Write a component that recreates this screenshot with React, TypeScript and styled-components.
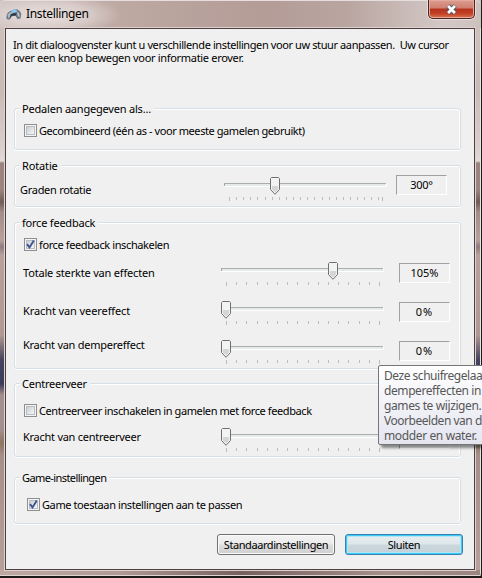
import React, { useLayoutEffect, useRef, useState } from "react";
import styled, { createGlobalStyle, css } from "styled-components";

const Global = createGlobalStyle`
  * { box-sizing: border-box; }
  body { margin: 0; overflow: hidden; background: #0d0b0b; }
`;

const uiFont = css`font: 11px/13px "Noto Sans", "Open Sans", sans-serif; color: #000;`;

const Window = styled.div`
  position: relative;
  width: 482px;
  height: 578px;
  padding: 0 7px 8px 5px;
  overflow: hidden;
  background:
    linear-gradient(#1d1a1a, #1d1a1a) 0 576px / 482px 2px no-repeat,
    linear-gradient(#ded4d1, #ded4d1) 0 575px / 480px 1px no-repeat,
    linear-gradient(90deg, #c0a8a2, #b09a95 25%, #76615e 50%, #a68e89 80%, #9c8581) 0 570px / 480px 5px no-repeat,
    linear-gradient(#201a1a, #201a1a) 481px 0 / 1px 578px no-repeat,
    linear-gradient(#e9e1df, #e9e1df) 480px 6px / 1px 568px no-repeat,
    linear-gradient(#cfc2bf 0, #c9bab7 90px, #dad0ce 150px, #e2dad8 161px, #9c8581 163px, #9c8581 190px, #6f5b58 202px,
      #a38d88 212px, #b8a19b 240px, #8f7c80 247px, #b8a19b 255px, #b09893 335px, #45435f 360px,
      #3c3b58 384px, #a58f8c 395px, #a58f8c 430px, #8a7660 443px, #a68e89 455px, #b8a09b 578px);
  ${uiFont}
`;

const TitleBar = styled.header`
  display: flex;
  align-items: flex-start;
  height: 28px;
  margin: 0 -6px 0 -5px;
  padding: 6px 6px 0 6px;
  border-top: 1px solid #e6dedc;
  border-radius: 6px 6px 0 0;
  background:
    radial-gradient(ellipse 72px 20px at 50px 14px, rgba(238,230,228,.85), rgba(238,230,228,.5) 55%, transparent),
    linear-gradient(90deg, #cfc2bf, #bda8a2 25%, #b49c97 55%, #b9a5a0 72%, #d3c8c5 92%, #cdc1be);
`;

const Title = styled.h1`
  flex: 1;
  margin: -1px 0 0 4px;
  font: 12px/16px "Noto Sans", "Open Sans", sans-serif;
`;

const CloseButton = styled.button`
  display: grid;
  place-items: center;
  width: 47px;
  height: 19px;
  margin-top: -7px;
  padding: 0;
  border: 1px solid #4c2320;
  border-top: 0;
  border-radius: 0 0 5px 5px;
  box-shadow: inset 0 0 0 1px #e3aa9e, 0 1px #e9dedb, 1px 0 #e9dedb, -1px 0 #e9dedb;
  background: linear-gradient(#dc9d90, #cf7f70 45%, #b5331c 50%, #c24026 75%, #dc7450);
`;

const Client = styled.main`
  height: 542px;
  padding: 9px 13px 0 8px;
  border: 1px solid #4e4040;
  background: #f0f0f0;
  box-shadow: 0 0 0 1px #ddd2cf;
`;

const Intro = styled.div`
  display: flex;
  flex-direction: column;
  align-items: flex-start;
  height: 70px;
  margin-left: -1px;
`;

const Group = styled.section<{ $h: number; $gap: number }>`
  height: ${p => p.$h}px;
  margin-bottom: ${p => p.$gap}px;
  border: 1px solid #d5dfe5;
  border-radius: 3px;
  box-shadow: inset 1px 1px #fff, inset -1px 0 #fff, 0 1px #fff;
`;

const Legend = styled.h2`
  width: max-content;
  height: 13px;
  margin: -7px 0 0 5px;
  padding: 0 3px 0 2px;
  background: #f0f0f0;
  ${uiFont}
`;

const CheckRow = styled.label<{ $top: number; $left: number }>`
  display: flex;
  align-items: center;
  height: 13px;
  margin: ${p => p.$top}px 0 0 ${p => p.$left}px;
  gap: 2px;
`;

const Box = styled.span`
  display: grid;
  place-items: center;
  width: 13px;
  height: 13px;
  border: 1px solid #8e8f8f;
  background: linear-gradient(135deg, #cbcfd5, #f6f6f6) 2px 2px / 7px 7px no-repeat, #f4f4f4;
  box-shadow: inset 0 0 0 1px #f4f4f4, inset 0 0 0 2px #b9bec4;
`;

const SliderRow = styled.div<{ $top: number; $label: number; $slider: number }>`
  display: grid;
  grid-template-columns: ${p => p.$slider}px 163px 51px;
  column-gap: 12px;
  align-items: start;
  height: 26px;
  margin-top: ${p => p.$top}px;
  padding-left: ${p => p.$label}px;
`;

const Caption = styled.div<{ $top: number }>`
  margin-top: ${p => p.$top}px;
`;

const Value = styled.output<{ $shift: number; $top: number }>`
  display: grid;
  place-items: center;
  width: 51px;
  height: 20px;
  margin: ${p => p.$top}px 0 0 ${p => p.$shift}px;
  padding-bottom: 1px;
  border: 1px solid;
  border-color: #a0a0a0 #fff #fff #a0a0a0;
`;

const SliderSvg = styled.svg`display: block;`;

const Actions = styled.footer`
  display: flex;
  justify-content: flex-end;
  gap: 10px;
  margin-right: -2px;
`;

const Button = styled.button<{ $primary?: boolean }>`
  display: grid;
  place-items: center;
  width: 118px;
  height: 21px;
  padding: 0 0 1px;
  border: 1px solid ${p => (p.$primary ? "#3c7fb1" : "#707070")};
  border-radius: 3px;
  box-shadow: ${p => (p.$primary ? "inset 0 0 0 1px #35cdf7, inset 0 0 0 2px #b5e4f2" : "inset 0 0 0 1px #fbfbfb")};
  background: ${p => p.$primary
    ? "linear-gradient(#e8eef1, #dde6ea 48%, #ccd8de 52%, #c3d0d7)"
    : "linear-gradient(#f2f2f2, #ebebeb 48%, #dddddd 52%, #cfcfcf)"};
  ${uiFont}
`;

const Tooltip = styled.aside`
  position: absolute;
  left: 378px;
  top: 365px;
  display: flex;
  flex-direction: column;
  align-items: flex-start;
  width: 180px;
  height: 80px;
  padding: 2px 5px;
  border: 1px solid #767676;
  border-radius: 2px;
  background: linear-gradient(#fff, #e4e5f0);
  box-shadow: 3px 3px 3px rgba(0, 0, 0, .45);
  font: 12px/15px "Noto Sans", "Open Sans", sans-serif;
  color: #575757;
`;

const Run = styled.span`
  display: block;
  width: max-content;
  white-space: pre;
`;

/* Tracks the text out or in so that it takes up the given width. */
function Text({ w, children }: { w: number; children: string }) {
  const ref = useRef<HTMLSpanElement>(null);
  const [spacing, setSpacing] = useState(0);
  useLayoutEffect(() => {
    if (ref.current) setSpacing((w - ref.current.offsetWidth) / children.length);
  }, []);
  return <Run ref={ref} style={{ letterSpacing: spacing }}>{children}</Run>;
}

function Check({ on }: { on?: boolean }) {
  return (
    <Box>
      {on && (
        <svg width="9" height="9" viewBox="0 0 9 9">
          <path d="M1 4.2 L3.5 7.4 L7.8 .6" fill="none" stroke="#3f558f" strokeWidth="1.9" />
        </svg>
      )}
    </Box>
  );
}

function Slider({ at, step }: { at: number; step: number }) {
  const ticks: number[] = [];
  for (let x = 0; x < 152.5; x += step) ticks.push(Math.round(x));
  ticks.push(153);
  return (
    <SliderSvg width="163" height="25" viewBox="0 0 163 25">
      <rect x="0" y="6" width="163" height="4" fill="#fff" />
      <rect x="0" y="6" width="162" height="3" fill="#e7eaea" />
      <rect x="0" y="6" width="162" height="1" fill="#a9afaf" />
      <rect x="0" y="6" width="1" height="3" fill="#a0a5a5" />
      {ticks.map(x => (
        <rect key={x} x={x + 5} y="20" width="1" height={x === 0 || x === 153 ? 4 : 3} fill="#bcbcbc" />
      ))}
      <g transform={`translate(${at} 0)`}>
        <path d="M1.5 .5H8.5L9.5 1.5V12.5L5 17.3L.5 12.5V1.5Z" fill="#f3f3f3" stroke="#6f6f6f" />
        <path d="M2 9H8V12.3L5 15.6L2 12.3Z" fill="#d5d5d5" />
      </g>
    </SliderSvg>
  );
}

interface SettingProps {
  top: number; label: string; w: number; captionTop: number; value: string; vw: number; at: number; rotation?: boolean;
}

function Setting({ top, label, w, captionTop, value, vw, at, rotation }: SettingProps) {
  return (
    <SliderRow $top={top} $label={rotation ? 5 : 8} $slider={rotation ? 192 : 186}>
      <Caption $top={captionTop}><Text w={w}>{label}</Text></Caption>
      <Slider at={at} step={rotation ? 153 / 21.5 : 10.2} />
      <Value $shift={rotation ? -3 : 3} $top={rotation ? -2 : 1}><Text w={vw}>{value}</Text></Value>
    </SliderRow>
  );
}

function WheelIcon() {
  return (
    <svg width="16" height="16" viewBox="0 0 16 16">
      <path d="M.5 12 Q0 6 3.5 4.5 L9 2 Q14 2.5 15.3 7 L14.5 11.5 L11.5 12.2 L9.5 8.8 L6 9.2 L3.5 12.8Z" fill="#6b7782" />
      <path d="M1.5 8 Q3.5 4.5 8 4 L6 7.5 L2.5 11.5Z" fill="#a9b8c4" />
      <path d="M5 4 L9 1.8 L11.5 4.2 L8 6Z" fill="#8cc8f5" />
      <path d="M4.5 7.4 Q8 5.4 10.6 6.6 L9.8 8.4 L5.6 8.8 L3.8 11.4Z" fill="#2b3542" />
      <path d="M11.3 4.5 Q14.2 6 13.4 10.5 L11.5 8Z" fill="#c3cad1" />
    </svg>
  );
}

export default function App() {
  return (
    <>
      <Global />
      <Window>
        <TitleBar>
          <WheelIcon />
          <Title><Text w={63}>Instellingen</Text></Title>
          <CloseButton aria-label="Sluiten">
            <svg width="13" height="11" viewBox="0 0 13 11">
              <path d="M3 2 L10 9 M10 2 L3 9" stroke="#525868" strokeWidth="4.8" />
              <path d="M3.1 2.1 L9.9 8.9 M9.9 2.1 L3.1 8.9" stroke="#fff" strokeWidth="2.8" />
            </svg>
          </CloseButton>
        </TitleBar>
        <Client>
          <Intro>
            <Text w={436}>In dit dialoogvenster kunt u verschillende instellingen voor uw stuur aanpassen.  Uw cursor</Text>
            <Text w={231}>over een knop bewegen voor informatie erover.</Text>
          </Intro>

          <Group $h={42} $gap={15}>
            <Legend><Text w={129}>Pedalen aangegeven als...</Text></Legend>
            <CheckRow $top={9} $left={9}><Check /><Text w={266}>Gecombineerd (één as - voor meeste gamelen gebruikt)</Text></CheckRow>
          </Group>

          <Group $h={42} $gap={15}>
            <Legend><Text w={36}>Rotatie</Text></Legend>
            <Setting rotation top={5} label="Graden rotatie" w={71} captionTop={6} value="300°" vw={23} at={46} />
          </Group>

          <Group $h={147} $gap={14}>
            <Legend><Text w={73}>force feedback</Text></Legend>
            <CheckRow $top={9} $left={9}><Check on /><Text w={130}>force feedback inschakelen</Text></CheckRow>
            <Setting top={11} label="Totale sterkte van effecten" w={132} captionTop={4} value="105%" vw={28} at={107} />
            <Setting top={13} label="Kracht van veereffect" w={107} captionTop={3} value="0%" vw={17} at={0} />
            <Setting top={13} label="Kracht van dempereffect" w={121} captionTop={-2} value="0%" vw={17} at={0} />
          </Group>

          <Group $h={74} $gap={20}>
            <Legend><Text w={65}>Centreerveer</Text></Legend>
            <CheckRow $top={14} $left={9}><Check /><Text w={273}>Centreerveer inschakelen in gamelen met force feedback</Text></CheckRow>
            <Setting top={11} label="Kracht van centreerveer" w={118} captionTop={2} value="0%" vw={17} at={0} />
          </Group>

          <Group $h={47} $gap={10}>
            <Legend><Text w={84}>Game-instellingen</Text></Legend>
            <CheckRow $top={14} $left={12}><Check on /><Text w={200}>Game toestaan instellingen aan te passen</Text></CheckRow>
          </Group>

          <Actions>
            <Button><Text w={104}>Standaardinstellingen</Text></Button>
            <Button $primary><Text w={33}>Sluiten</Text></Button>
          </Actions>
        </Client>
        <Tooltip>
          <Text w={103}>Deze schuifregelaar</Text>
          <Text w={97}>dempereffecten in</Text>
          <Text w={97}>games te wijzigen.</Text>
          <Text w={98}>Voorbeelden van d</Text>
          <Text w={93}>modder en water.</Text>
        </Tooltip>
      </Window>
    </>
  );
}
